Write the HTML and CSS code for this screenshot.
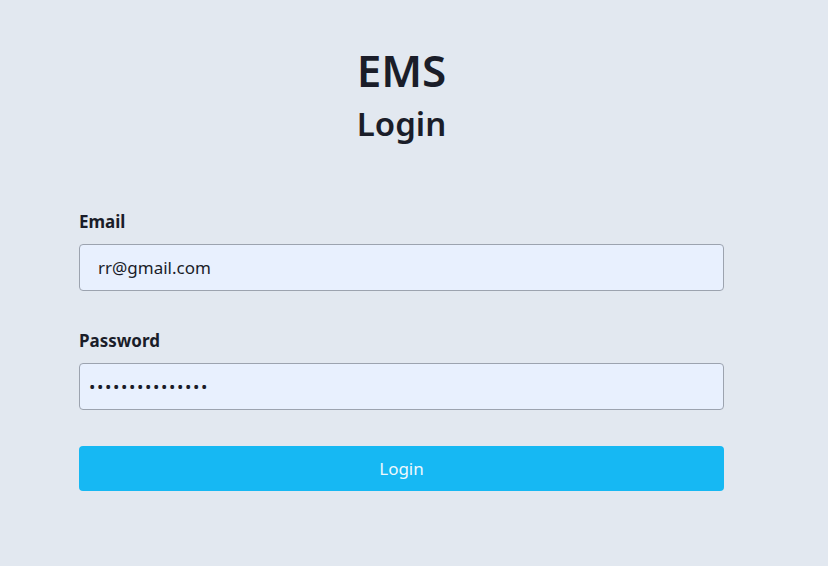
FILE: index.html
```html
<!DOCTYPE html>
<html lang="en">
<head>
<meta charset="utf-8">
<title>EMS Login</title>
<link rel="stylesheet" href="styles.css">
</head>
<body>
<main class="page">
  <header class="heading">
    <h1 class="title">EMS</h1>
    <h2 class="subtitle">Login</h2>
  </header>
  <form class="form">
    <div class="field">
      <label class="label" for="email">Email</label>
      <input class="input" id="email" type="email" value="rr@gmail.com">
    </div>
    <div class="field field-next">
      <label class="label" for="password">Password</label>
      <input class="input input-password" id="password" type="password" value="rrrrrrrrrrrrrrr">
    </div>
    <button class="button" type="button">Login</button>
  </form>
</main>
</body>
</html>
```
FILE: styles.css
```css
* { box-sizing: border-box; }
html, body {
  margin: 0;
  padding: 0;
  background: #e2e8f0;
}
body {
  font-family: "Noto Sans", "Open Sans", sans-serif;
  color: #1a1d29;
}
.page {
  width: 645px;
  margin-left: 79px;
  padding-top: 40px;
}
.heading {
  display: flex;
  flex-direction: column;
  align-items: center;
}
.title {
  margin: 0;
  font-size: 44px;
  line-height: 60px;
  font-weight: 600;
}
.subtitle {
  margin: 0;
  font-size: 33px;
  line-height: 48px;
  font-weight: 600;
}
.form {
  margin-top: 62px;
  display: flex;
  flex-direction: column;
}
.field {
  display: flex;
  flex-direction: column;
}
.field-next {
  margin-top: 38px;
}
.label {
  font-size: 17px;
  font-weight: 700;
  line-height: 24px;
  margin-bottom: 10px;
}
.input {
  height: 47px;
  border: 1px solid #9ca3af;
  border-radius: 4px;
  background: #e8f0fe;
  padding: 0 18px;
  font-family: inherit;
  font-size: 17px;
  color: #1a1d29;
  outline: none;
}
.input-password {
  padding-left: 9px;
  letter-spacing: 1.6px;
}
.button {
  height: 45px;
  margin-top: 36px;
  border: none;
  border-radius: 4px;
  background: #16b8f3;
  color: #eef8fd;
  font-family: inherit;
  font-size: 17px;
}
```
